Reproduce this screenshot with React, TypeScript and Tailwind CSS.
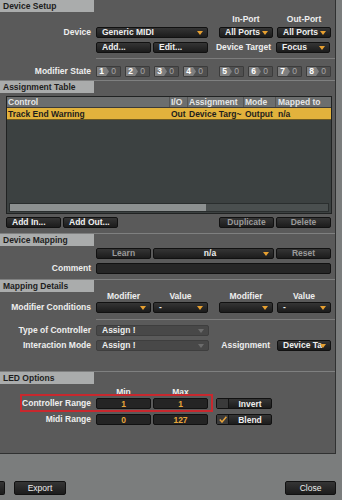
import type { ReactNode } from 'react';

// ── Small pieces ─────────────────────────────────────────────────

function Arrow({ dim }: { dim?: boolean }) {
  return (
    <svg width="6" height="4" viewBox="0 0 6 4" className="shrink-0">
      <path d="M0 0H6L3 4Z" fill={dim ? '#6c6c6c' : '#e7a030'} />
    </svg>
  );
}

function SectionHeader({ title }: { title: string }) {
  return (
    <div className="flex border-t border-[#7f8080]">
      <div className="h-[12px] w-[94px] bg-[#aaacac] pl-[3px] leading-[12px] text-[#1d1d1d]">{title}</div>
    </div>
  );
}

function Btn({
  children,
  className = '',
  muted,
  left,
}: {
  children: ReactNode;
  className?: string;
  muted?: boolean;
  left?: boolean;
}) {
  return (
    <div
      className={`flex h-[11px] shrink-0 items-center rounded-[2px] border border-[#111] bg-linear-to-b from-[#353535] to-[#1c1c1c] leading-[11px] ${
        left ? 'pl-[5px]' : 'justify-center'
      } ${muted ? 'text-[#9a9a9a]' : 'text-[#f0f0f0]'} ${className}`}
    >
      {children}
    </div>
  );
}

function Drop({
  label,
  className = '',
  center,
  dim,
}: {
  label: string;
  className?: string;
  center?: boolean;
  dim?: boolean;
}) {
  return (
    <div
      className={`flex h-[11px] shrink-0 items-center gap-[2px] overflow-hidden rounded-[2px] border pl-[5px] pr-[4px] leading-[11px] ${
        dim ? 'border-[#3e3e3e] bg-[#484848]' : 'border-[#111] bg-linear-to-b from-[#353535] to-[#1c1c1c]'
      } ${className}`}
    >
      <span className={`min-w-0 flex-1 whitespace-nowrap ${center ? 'text-center' : ''}`}>{label}</span>
      <Arrow dim={dim} />
    </div>
  );
}

function Label({ children }: { children: ReactNode }) {
  return <div className="w-[96px] shrink-0 pr-[5px] text-right leading-[11px]">{children}</div>;
}

function Chip({ n }: { n: number }) {
  return (
    <div className="flex h-[11px] w-[25px] items-center overflow-hidden rounded-[1px] border border-[#3c3c3c] bg-[#505050]">
      <div className="flex h-full w-[9px] items-center justify-center bg-[#7f7f7f] leading-[9px] text-white">{n}</div>
      <svg width="3" height="9" viewBox="0 0 3 9" className="shrink-0">
        <path d="M0 0L3 4.5L0 9Z" fill="#7f7f7f" />
      </svg>
      <span className="ml-auto mr-[4px] font-normal text-[#a6a6a6]">0</span>
    </div>
  );
}

function Field({ value }: { value: string }) {
  return (
    <div className="h-[11px] w-[55px] shrink-0 rounded-[2px] border border-[#111] bg-[#242424] text-center leading-[10px] text-[#e8a63a]">
      {value}
    </div>
  );
}

function Toggle({ label, checked }: { label: string; checked?: boolean }) {
  return (
    <div className="flex h-[11px] w-[56px] rounded-[2px] border border-[#111] bg-linear-to-b from-[#353535] to-[#1c1c1c]">
      <div className="flex w-[12px] items-center justify-center border-r border-[#141414] bg-[#3a3a3a]">
        {checked && (
          <svg width="8" height="7" viewBox="0 0 8 7">
            <path d="M0.8 3.6L3 6L7.4 0.8" fill="none" stroke="#e8a33a" strokeWidth="1.5" />
          </svg>
        )}
      </div>
      <div className="flex-1 text-center leading-[10px]">{label}</div>
    </div>
  );
}

// ── App ──────────────────────────────────────────────────────────

export default function App() {
  return (
    <div className="flex h-[500px] w-[342px] flex-col bg-[#7b7d7d] font-['Liberation_Sans',Arial,sans-serif] text-[8.5px] font-bold text-[#eeeeee]">
      <div className="relative h-[454px] w-[336px] shrink-0 border-r border-b border-[#303131] bg-[#5a5a5a]">
        {/* Device Setup */}
        <div className="h-[80px]">
          <div className="flex">
            <div className="h-[12px] w-[94px] bg-[#aaacac] pl-[3px] leading-[12px] text-[#1d1d1d]">Device Setup</div>
          </div>
          <div className="flex h-[14px] leading-[14px]">
            <div className="ml-[219px] w-[54px] text-center">In-Port</div>
            <div className="ml-[4px] w-[54px] text-center">Out-Port</div>
          </div>
          <div className="mt-[1px] flex">
            <Label>Device</Label>
            <Drop label="Generic MIDI" className="w-[112px]" />
            <Drop label="All Ports" className="ml-[11px] w-[54px]" />
            <Drop label="All Ports" className="ml-[4px] w-[54px]" />
          </div>
          <div className="mt-[4px] flex">
            <div className="w-[96px] shrink-0" />
            <Btn left className="w-[55px]">Add...</Btn>
            <Btn left className="ml-[2px] w-[55px]">Edit...</Btn>
            <div className="w-[64px] shrink-0 pr-[1px] text-right leading-[11px]">Device Target</div>
            <Drop label="Focus" className="ml-[4px] w-[54px]" />
          </div>
          <div className="mt-[5px] ml-[96px] h-px bg-[#7c7c7c]" />
          <div className="mt-[7px] flex">
            <Label>Modifier State</Label>
            <div className="flex w-[112px] justify-between">
              <Chip n={1} />
              <Chip n={2} />
              <Chip n={3} />
              <Chip n={4} />
            </div>
            <div className="ml-[11px] flex w-[112px] justify-between">
              <Chip n={5} />
              <Chip n={6} />
              <Chip n={7} />
              <Chip n={8} />
            </div>
          </div>
        </div>

        {/* Assignment Table */}
        <div className="h-[153px]">
          <SectionHeader title="Assignment Table" />
          <div className="mt-[3px] ml-[6px] flex h-[118px] w-[326px] flex-col border border-[#202222] bg-[#3c4141]">
            <div className="flex h-[11px] border-b border-[#3a3a3a] bg-[#6c6e6e] leading-[11px] text-[#e6e6e6]">
              <div className="w-[163px] border-r border-[#555] pl-[1px]">Control</div>
              <div className="w-[18px] border-r border-[#555] pl-[1px]">I/O</div>
              <div className="w-[56px] border-r border-[#555] pl-[1px]">Assignment</div>
              <div className="w-[32px] border-r border-[#555] pl-[1px]">Mode</div>
              <div className="flex-1 pl-[2px]">Mapped to</div>
            </div>
            <div className="flex h-[12px] border-b border-[#6e5a22] bg-[#e2b23c] leading-[12px] text-[#1c1c1c]">
              <div className="w-[163px] pl-[1px]">Track End Warning</div>
              <div className="w-[18px] pl-[1px]">Out</div>
              <div className="w-[56px] whitespace-nowrap pl-[1px]">Device Targ~</div>
              <div className="w-[32px] pl-[1px]">Output</div>
              <div className="flex-1 pl-[2px]">n/a</div>
            </div>
            <div className="flex-1" />
            <div className="mx-[2px] mb-[1px] flex h-[9px] border border-[#2a2e2e] bg-[#4a4f4f]">
              <div className="w-[196px] bg-[#8d9191]" />
            </div>
          </div>
          <div className="mt-[3px] flex">
            <Btn left className="ml-[6px] w-[55px]">Add In...</Btn>
            <Btn left className="ml-[2px] w-[55px]">Add Out...</Btn>
            <Btn muted className="ml-[101px] w-[55px]">Duplicate</Btn>
            <Btn muted className="ml-[2px] w-[55px]">Delete</Btn>
          </div>
        </div>

        {/* Device Mapping */}
        <div className="h-[46px]">
          <SectionHeader title="Device Mapping" />
          <div className="mt-[2px] flex">
            <div className="w-[96px] shrink-0" />
            <Btn muted className="w-[55px]">Learn</Btn>
            <Drop label="n/a" center className="ml-[2px] w-[121px]" />
            <Btn muted className="ml-[2px] w-[55px]">Reset</Btn>
          </div>
          <div className="mt-[4px] flex">
            <Label>Comment</Label>
            <div className="h-[11px] w-[235px] rounded-[2px] border border-[#111] bg-[#262626]" />
          </div>
        </div>

        {/* Mapping Details */}
        <div className="h-[92px]">
          <SectionHeader title="Mapping Details" />
          <div className="flex h-[8px] leading-[8px]">
            <div className="ml-[96px] w-[55px] text-center">Modifier</div>
            <div className="ml-[2px] w-[55px] text-center">Value</div>
            <div className="ml-[11px] w-[54px] text-center">Modifier</div>
            <div className="ml-[4px] w-[54px] text-center">Value</div>
          </div>
          <div className="mt-[2px] flex">
            <Label>Modifier Conditions</Label>
            <Drop label="" className="w-[55px]" />
            <Drop label="-" className="ml-[2px] w-[55px]" />
            <Drop label="" className="ml-[11px] w-[54px]" />
            <Drop label="-" className="ml-[4px] w-[54px]" />
          </div>
          <div className="mt-[6px] ml-[96px] h-px bg-[#7c7c7c]" />
          <div className="mt-[5px] flex">
            <Label>Type of Controller</Label>
            <Drop label="Assign !" dim className="w-[113px]" />
          </div>
          <div className="mt-[4px] flex">
            <Label>Interaction Mode</Label>
            <Drop label="Assign !" dim className="w-[113px]" />
            <div className="w-[63px] shrink-0 pr-[2px] text-right leading-[11px]">Assignment</div>
            <Drop label="Device Ta" className="ml-[5px] w-[54px]" />
          </div>
        </div>

        {/* LED Options */}
        <div>
          <SectionHeader title="LED Options" />
          <div className="mt-[2px] flex h-[12px] leading-[12px]">
            <div className="ml-[96px] w-[55px] text-center">Min</div>
            <div className="ml-[2px] w-[55px] text-center">Max</div>
          </div>
          <div className="flex">
            <Label>Controller Range</Label>
            <Field value="1" />
            <div className="ml-[2px]">
              <Field value="1" />
            </div>
            <div className="ml-[8px]">
              <Toggle label="Invert" />
            </div>
          </div>
          <div className="mt-[5px] flex">
            <Label>Midi Range</Label>
            <Field value="0" />
            <div className="ml-[2px]">
              <Field value="127" />
            </div>
            <div className="ml-[8px]">
              <Toggle label="Blend" checked />
            </div>
          </div>
        </div>

        {/* highlight drawn over the Controller Range row */}
        <div className="pointer-events-none absolute top-[394px] left-[20px] h-[18px] w-[193px] border-2 border-[#c8282e]" />
      </div>

      {/* Bottom bar */}
      <div className="flex flex-1 items-end pb-[5px] pr-[6px]">
        <div className="h-[14px] w-[5px] rounded-r-[2px] border border-l-0 border-[#111] bg-linear-to-b from-[#353535] to-[#1c1c1c]" />
        <div className="ml-[9px] flex h-[14px] w-[52px] items-center justify-center rounded-[2px] border border-[#111] bg-linear-to-b from-[#353535] to-[#1c1c1c] font-normal">
          Export
        </div>
        <div className="ml-auto flex h-[14px] w-[51px] items-center justify-center rounded-[2px] border border-[#111] bg-linear-to-b from-[#353535] to-[#1c1c1c] font-normal">
          Close
        </div>
      </div>
    </div>
  );
}
